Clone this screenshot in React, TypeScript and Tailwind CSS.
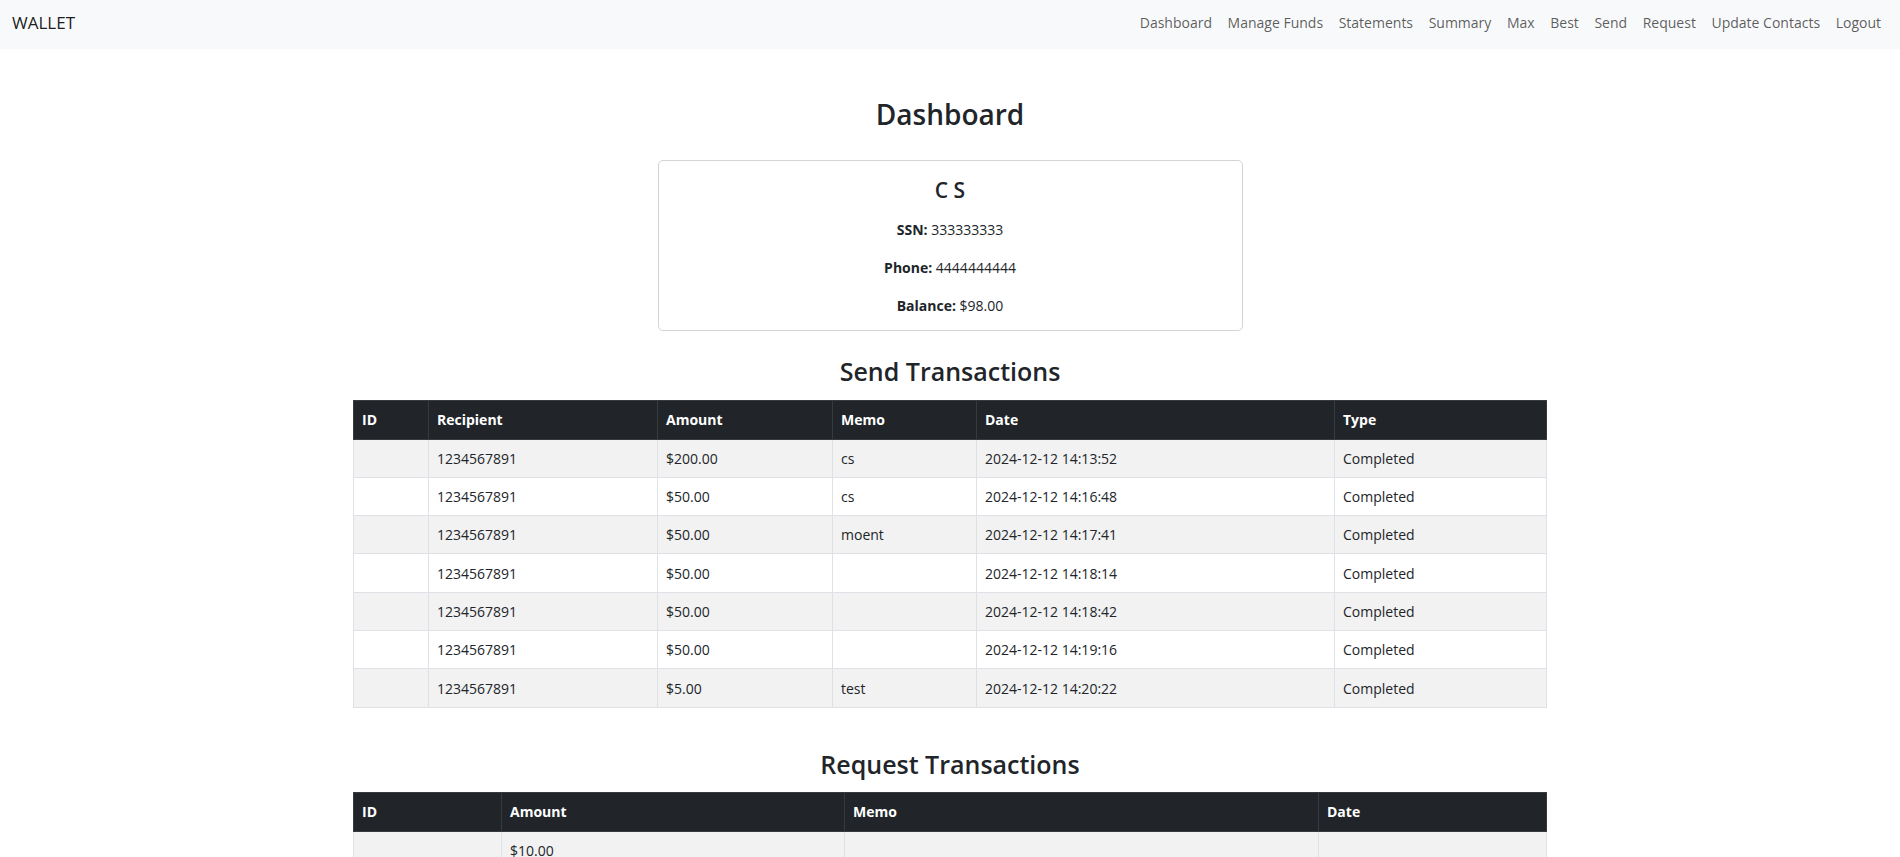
import React from 'react';

const NAV_LINKS = ['Dashboard', 'Manage Funds', 'Statements', 'Summary', 'Max', 'Best', 'Send', 'Request', 'Update Contacts', 'Logout'];

const SEND_COLS = [
  { label: 'ID', w: 'w-[75px]' },
  { label: 'Recipient', w: 'w-[229px]' },
  { label: 'Amount', w: 'w-[175px]' },
  { label: 'Memo', w: 'w-[144px]' },
  { label: 'Date', w: 'w-[358px]' },
  { label: 'Type', w: 'w-[212px]' },
];

const SEND_ROWS = [
  ['', '1234567891', '$200.00', 'cs', '2024-12-12 14:13:52', 'Completed'],
  ['', '1234567891', '$50.00', 'cs', '2024-12-12 14:16:48', 'Completed'],
  ['', '1234567891', '$50.00', 'moent', '2024-12-12 14:17:41', 'Completed'],
  ['', '1234567891', '$50.00', '', '2024-12-12 14:18:14', 'Completed'],
  ['', '1234567891', '$50.00', '', '2024-12-12 14:18:42', 'Completed'],
  ['', '1234567891', '$50.00', '', '2024-12-12 14:19:16', 'Completed'],
  ['', '1234567891', '$5.00', 'test', '2024-12-12 14:20:22', 'Completed'],
];

const REQUEST_COLS = [
  { label: 'ID', w: 'w-[148px]' },
  { label: 'Amount', w: 'w-[343px]' },
  { label: 'Memo', w: 'w-[474px]' },
  { label: 'Date', w: 'w-[228px]' },
];

const REQUEST_ROWS = [
  ['', '$10.00', '', ''],
];

function DataTable({ cols, rows }: { cols: { label: string; w: string }[]; rows: string[][] }) {
  return (
    <table className="w-[1193px] table-fixed border-collapse text-[14px]">
      <colgroup>
        {cols.map(c => <col key={c.label} className={c.w} />)}
      </colgroup>
      <thead>
        <tr className="h-[39px] bg-[#212529]">
          {cols.map(c => (
            <th key={c.label} className="border border-[#373b3e] px-2 text-left font-bold text-white">{c.label}</th>
          ))}
        </tr>
      </thead>
      <tbody>
        {rows.map((r, i) => (
          <tr key={i} className={i % 2 === 0 ? 'h-[38.3px] bg-[#f2f2f2]' : 'h-[38.3px] bg-white'}>
            {r.map((cell, j) => (
              <td key={j} className="border border-[#dee2e6] px-2 text-[#212529]">{cell}</td>
            ))}
          </tr>
        ))}
      </tbody>
    </table>
  );
}

export default function App() {
  return (
    <div className="min-h-screen bg-white font-['Open_Sans','Noto_Sans',sans-serif] text-[#212529]">
      <nav className="flex h-[49px] items-center justify-between bg-[#f8f9fa] pb-[4px] pl-3 pr-[19px]">
        <span className="text-[17px] text-black/90">WALLET</span>
        <div className="flex gap-[15.6px] text-[14px] text-black/65">
          {NAV_LINKS.map(l => <a key={l} href="#" className="hover:text-black/80">{l}</a>)}
        </div>
      </nav>

      <main className="flex flex-col items-center pb-10">
        <h2 className="mt-[49px] text-[28px] font-semibold leading-[1.2]">Dashboard</h2>

        <div className="mt-[28px] flex w-[585px] flex-col items-center gap-[16px] rounded-[5px] border border-[#d4d4d4] pb-[13px] pt-[16px]">
          <h4 className="text-[21px] font-semibold leading-[26px]">C S</h4>
          <p className="text-[14px] leading-[22px]"><b>SSN:</b> 333333333</p>
          <p className="text-[14px] leading-[22px]"><b>Phone:</b> 4444444444</p>
          <p className="text-[14px] leading-[22px]"><b>Balance:</b> $98.00</p>
        </div>

        <h3 className="mb-[14px] mt-[25px] text-[25px] font-semibold leading-[30px]">Send Transactions</h3>
        <DataTable cols={SEND_COLS} rows={SEND_ROWS} />

        <h3 className="mb-[13px] mt-[41px] text-[25px] font-semibold leading-[30px]">Request Transactions</h3>
        <DataTable cols={REQUEST_COLS} rows={REQUEST_ROWS} />
      </main>
    </div>
  );
}
